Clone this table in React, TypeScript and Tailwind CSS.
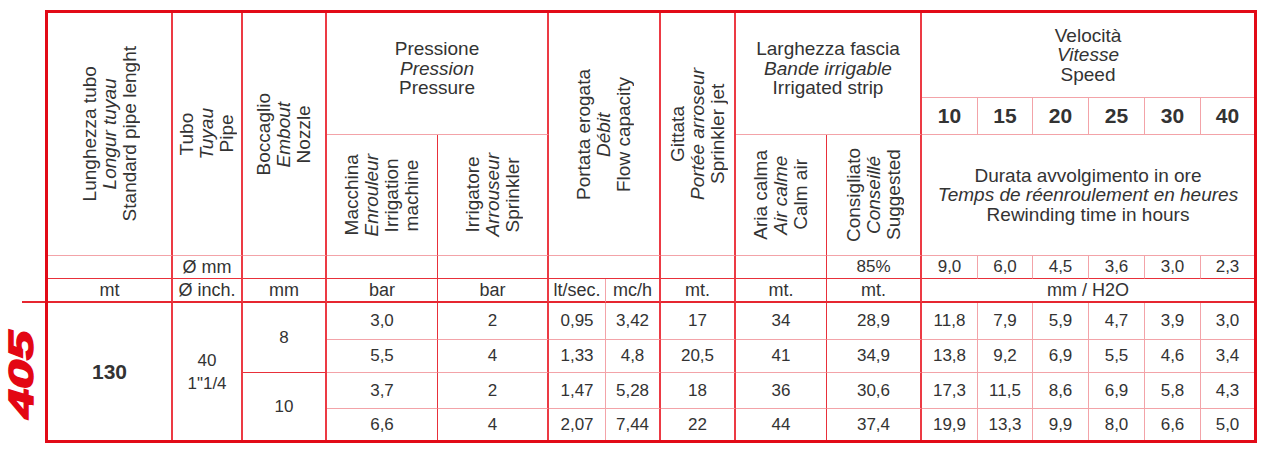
import React from 'react';

const MAJOR_R = 'border-r-2 border-r-[#ec3a44]';
const MID_R = 'border-r border-r-[#e8303a]';
const MINOR_R = 'border-r border-r-[#f3a3a8]';
const MINOR_B = 'border-b border-b-[#f3a3a8]';
const MID_B = 'border-b border-b-[#e8303a]';
const MAJOR_B = 'border-b-2 border-b-[#e62630]';

// right border of columns 4..16
const rightBorders = [MID_R, MAJOR_R, MINOR_R, MAJOR_R, MAJOR_R, MID_R, MAJOR_R, MINOR_R, MINOR_R, MINOR_R, MINOR_R, MINOR_R, ''];

const speeds = ['10', '15', '20', '25', '30', '40'];
const perMm = ['9,0', '6,0', '4,5', '3,6', '3,0', '2,3'];

const rows = [
  ['3,0', '2', '0,95', '3,42', '17', '34', '28,9', '11,8', '7,9', '5,9', '4,7', '3,9', '3,0'],
  ['5,5', '4', '1,33', '4,8', '20,5', '41', '34,9', '13,8', '9,2', '6,9', '5,5', '4,6', '3,4'],
  ['3,7', '2', '1,47', '5,28', '18', '36', '30,6', '17,3', '11,5', '8,6', '6,9', '5,8', '4,3'],
  ['6,6', '4', '2,07', '7,44', '22', '44', '37,4', '19,9', '13,3', '9,9', '8,0', '6,6', '5,0']
];

function Cell({ className = '', children }: { className?: string; children?: React.ReactNode }) {
  return <div className={`flex items-center justify-center text-center ${className}`}>{children}</div>;
}

function Vertical({ lines }: { lines: string[] }) {
  // second line is the french one, set in italics
  return (
    <div className="[writing-mode:vertical-rl] rotate-180 text-center text-[19px] leading-[20px]">
      {lines.map((l, i) => (
        <span key={i} className={i === 1 ? 'block italic' : 'block'}>{l}</span>
      ))}
    </div>
  );
}

function Stacked({ a, b, c }: { a: string; b: string; c: string }) {
  return (
    <div className="text-[19px] leading-[19.5px]">
      <div>{a}</div>
      <div className="italic">{b}</div>
      <div>{c}</div>
    </div>
  );
}

export default function App() {
  return (
    <div className="flex h-[462px] w-[1270px] bg-white font-['Liberation_Sans',Arial,sans-serif] text-[#333]">
      <div className="flex w-[45px] flex-col">
        <div className="h-[301px]" />
        <div className="ml-[22px] h-[2px] bg-[#e62630]" />
        <div className="flex flex-1 items-center justify-center pb-[16px] pr-[4px]">
          <span className="-rotate-90 scale-x-150 text-[35px] font-bold italic leading-none text-[#e30613] [-webkit-text-stroke:1.5px_#e30613]">405</span>
        </div>
      </div>

      <div className="mt-[10px] h-[433px] w-[1212px] border-[3px] border-[#e20a17]">
        <div className="grid h-full grid-cols-[125px_70px_84px_111px_111px_57px_55px_75px_91px_95px_56px_55px_56px_56px_56px_53px] grid-rows-[85px_37px_121px_23px_24px_37px_33px_36px_31px]">
          {/* header */}
          <Cell className={`row-span-3 ${MAJOR_R} ${MINOR_B}`}>
            <Vertical lines={['Lunghezza tubo', 'Longur tuyau', 'Standard pipe lenght']} />
          </Cell>
          <Cell className={`row-span-3 ${MAJOR_R} ${MINOR_B}`}>
            <Vertical lines={['Tubo', 'Tuyau', 'Pipe']} />
          </Cell>
          <Cell className={`row-span-3 ${MAJOR_R} ${MINOR_B}`}>
            <Vertical lines={['Boccaglio', 'Embout', 'Nozzle']} />
          </Cell>
          <Cell className={`col-span-2 row-span-2 pb-[10px] ${MAJOR_R} ${MINOR_B}`}>
            <Stacked a="Pressione" b="Pression" c="Pressure" />
          </Cell>
          <Cell className={`col-span-2 row-span-3 ${MAJOR_R} ${MINOR_B}`}>
            <Vertical lines={['Portata erogata', 'Débit', 'Flow capacity']} />
          </Cell>
          <Cell className={`row-span-3 ${MAJOR_R} ${MINOR_B}`}>
            <Vertical lines={['Gittata', 'Portée arroseur', 'Sprinkler jet']} />
          </Cell>
          <Cell className={`col-span-2 row-span-2 pb-[10px] ${MAJOR_R} ${MINOR_B}`}>
            <Stacked a="Larghezza fascia" b="Bande irrigable" c="Irrigated strip" />
          </Cell>
          <Cell className={`col-span-6 ${MINOR_B}`}>
            <Stacked a="Velocità" b="Vitesse" c="Speed" />
          </Cell>

          {speeds.map((s, i) => (
            <Cell key={s} className={`text-[21px] font-bold ${rightBorders[7 + i]} ${MINOR_B}`}>{s}</Cell>
          ))}

          <Cell className={`${MID_R} ${MINOR_B}`}>
            <Vertical lines={['Macchina', 'Enrouleur', 'Irrigation', 'machine']} />
          </Cell>
          <Cell className={`${MAJOR_R} ${MINOR_B}`}>
            <Vertical lines={['Irrigatore', 'Arrouseur', 'Sprinkler']} />
          </Cell>
          <Cell className={`${MID_R} ${MINOR_B}`}>
            <Vertical lines={['Aria calma', 'Air calme', 'Calm air']} />
          </Cell>
          <Cell className={`${MAJOR_R} ${MINOR_B}`}>
            <Vertical lines={['Consigliato', 'Conseillé', 'Suggested']} />
          </Cell>
          <Cell className={`col-span-6 ${MINOR_B}`}>
            <Stacked a="Durata avvolgimento in ore" b="Temps de réenroulement en heures" c="Rewinding time in hours" />
          </Cell>

          {/* Ø mm row */}
          <Cell className={`${MAJOR_R} ${MID_B}`} />
          <Cell className={`text-[18px] ${MAJOR_R} ${MID_B}`}>Ø mm</Cell>
          <Cell className={`${MAJOR_R} ${MID_B}`} />
          <Cell className={`${MID_R} ${MID_B}`} />
          <Cell className={`${MAJOR_R} ${MID_B}`} />
          <Cell className={`col-span-2 ${MAJOR_R} ${MID_B}`} />
          <Cell className={`${MAJOR_R} ${MID_B}`} />
          <Cell className={`${MID_R} ${MID_B}`} />
          <Cell className={`text-[17px] ${MAJOR_R} ${MID_B}`}>85%</Cell>
          {perMm.map((v, i) => (
            <Cell key={i} className={`text-[17px] ${rightBorders[7 + i]} ${MID_B}`}>{v}</Cell>
          ))}

          {/* units row */}
          {['mt', 'Ø inch.', 'mm'].map((u) => (
            <Cell key={u} className={`text-[18px] ${MAJOR_R} ${MAJOR_B}`}>{u}</Cell>
          ))}
          {['bar', 'bar', 'lt/sec.', 'mc/h', 'mt.', 'mt.', 'mt.'].map((u, i) => (
            <Cell key={i} className={`text-[18px] ${rightBorders[i]} ${MAJOR_B}`}>{u}</Cell>
          ))}
          <Cell className={`col-span-6 text-[18px] ${MAJOR_B}`}>mm / H2O</Cell>

          {/* data */}
          <Cell className={`row-span-4 text-[21px] font-bold ${MAJOR_R}`}>130</Cell>
          <Cell className={`row-span-4 text-[17px] leading-[23px] ${MAJOR_R}`}>
            <div>
              <div>40</div>
              <div>1"1/4</div>
            </div>
          </Cell>
          {rows.map((r, ri) => (
            <React.Fragment key={ri}>
              {ri === 0 && <Cell className={`row-span-2 text-[17px] ${MAJOR_R} ${MID_B}`}>8</Cell>}
              {ri === 2 && <Cell className={`row-span-2 text-[17px] ${MAJOR_R}`}>10</Cell>}
              {r.map((v, ci) => (
                <Cell key={ci} className={`text-[17px] ${rightBorders[ci]} ${ri < 3 ? MINOR_B : ''}`}>{v}</Cell>
              ))}
            </React.Fragment>
          ))}
        </div>
      </div>
    </div>
  );
}
